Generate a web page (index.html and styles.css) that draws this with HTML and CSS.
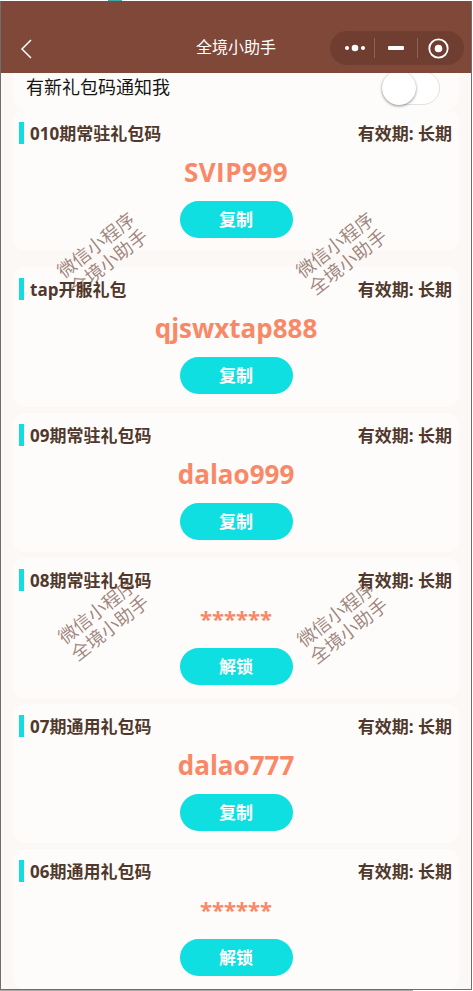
FILE: index.html
```html
<!DOCTYPE html>
<html lang="zh">
<head>
<meta charset="utf-8">
<title>全境小助手</title>
<link rel="stylesheet" href="styles.css">
</head>
<body>
<div class="top-strip"><span class="top-tab"></span></div>
<div class="window">
  <header class="nav">
    <svg class="back" width="14" height="20" viewBox="0 0 14 20"><path d="M12 1 L3 10 L12 19" fill="none" stroke="#fff" stroke-width="1.5"/></svg>
    <div class="nav-title">全境小助手</div>
    <div class="capsule">
      <svg class="cap-dots" width="22" height="10" viewBox="0 0 22 10"><circle cx="3" cy="5" r="2" fill="#fff"/><circle cx="11" cy="5" r="3.3" fill="#fff"/><circle cx="19" cy="5" r="2" fill="#fff"/></svg>
      <span class="cap-sep"></span>
      <span class="cap-min"></span>
      <span class="cap-sep"></span>
      <svg class="cap-home" width="21" height="21" viewBox="0 0 21 21"><circle cx="10.5" cy="10.5" r="9.2" fill="none" stroke="#fff" stroke-width="1.8"/><circle cx="10.5" cy="10.5" r="3.8" fill="#fff"/></svg>
    </div>
  </header>
  <main class="content">
    <section class="notice">
      <span>有新礼包码通知我</span>
      <span class="switch"><span class="knob"></span></span>
    </section>

    <section class="card first">
      <div class="card-head"><h2>010期常驻礼包码</h2><span class="valid">有效期: 长期</span></div>
      <div class="code wide">SVIP999</div>
      <button class="btn">复制</button>
    </section>
    <section class="card">
      <div class="card-head"><h2>tap开服礼包</h2><span class="valid">有效期: 长期</span></div>
      <div class="code">qjswxtap888</div>
      <button class="btn">复制</button>
    </section>
    <section class="card">
      <div class="card-head"><h2>09期常驻礼包码</h2><span class="valid">有效期: 长期</span></div>
      <div class="code">dalao999</div>
      <button class="btn">复制</button>
    </section>
    <section class="card">
      <div class="card-head"><h2>08期常驻礼包码</h2><span class="valid">有效期: 长期</span></div>
      <div class="code stars">******</div>
      <button class="btn">解锁</button>
    </section>
    <section class="card">
      <div class="card-head"><h2>07期通用礼包码</h2><span class="valid">有效期: 长期</span></div>
      <div class="code">dalao777</div>
      <button class="btn">复制</button>
    </section>
    <section class="card">
      <div class="card-head"><h2>06期通用礼包码</h2><span class="valid">有效期: 长期</span></div>
      <div class="code stars">******</div>
      <button class="btn">解锁</button>
    </section>
  </main>
  <div class="wm wm-a">微信小程序<br>全境小助手</div>
  <div class="wm wm-b">微信小程序<br>全境小助手</div>
  <div class="wm wm-c">微信小程序<br>全境小助手</div>
  <div class="wm wm-d">微信小程序<br>全境小助手</div>
</div>
<div class="bottom-strip"></div>
</body>
</html>
```
FILE: styles.css
```css
* { box-sizing: border-box; }
html, body { margin: 0; padding: 0; background: #fff; }
body {
  width: 473px;
  height: 991px;
  overflow: hidden;
  font-family: "Open Sans", "Noto Sans CJK SC", sans-serif;
}
.top-strip { height: 1px; padding-left: 108px; }
.top-tab { display: block; width: 14px; height: 1px; background: #3fa9a6; }
.bottom-strip { width: 413px; height: 1px; background: #ababab; }
.window {
  position: relative;
  width: 472px;
  height: 989px;
  border: 1px solid #6e6e6e;
  border-top: 0;
  background: #fcf8f5;
  overflow: hidden;
}
.nav {
  position: relative;
  z-index: 1;
  height: 72px;
  background: #7f4838;
  color: #fff;
}
.back { position: absolute; left: 18px; top: 38px; }
.nav-title {
  position: absolute;
  left: 0;
  right: 0;
  top: 35px;
  text-align: center;
  font-size: 16px;
  line-height: 22px;
}
.capsule {
  position: absolute;
  left: 329px;
  top: 30px;
  width: 134px;
  height: 34px;
  border-radius: 17px;
  background: #6f3e30;
  display: flex;
  align-items: center;
  padding-left: 14px;
}
.cap-sep { width: 1px; height: 20px; margin-left: 8px; background: #8f6254; }
.cap-min { width: 16px; height: 4px; margin-left: 13px; border-radius: 1px; background: #fff; }
.cap-min + .cap-sep { margin-left: 13px; }
.cap-home { margin-left: 10px; }
.notice {
  height: 37px;
  margin: 0 12px;
  padding: 0 19px 0 13px;
  border-radius: 0 0 14px 14px;
  background: #fefcfa;
  display: flex;
  align-items: flex-start;
  justify-content: space-between;
  font-size: 18px;
  line-height: 29px;
  color: #151515;
}
.switch {
  position: relative;
  flex: none;
  width: 58px;
  height: 34px;
  margin-top: -2px;
  border: 1px solid #e2e2e2;
  border-radius: 17px;
  background: #fff;
}
.knob {
  position: absolute;
  left: -1px;
  top: -1px;
  width: 34px;
  height: 34px;
  border-radius: 50%;
  background: #fff;
  box-shadow: 0 1px 3px rgba(0,0,0,.45);
}
.card {
  margin: 0 12px 6px;
  padding: 11px 7px 12.7px;
  border-radius: 12px;
  background: #fefcfa;
  display: flex;
  flex-direction: column;
  align-items: center;
}
.card.first { margin-bottom: 17px; padding-top: 12px; }
.card-head {
  align-self: stretch;
  height: 22px;
  margin-left: -1px;
  padding: 2px 0 0 6px;
  border-left: 5px solid #14dde0;
  display: flex;
  align-items: center;
  justify-content: space-between;
  color: #50392c;
}
.card-head h2 { margin: 0; font-size: 17px; font-weight: 700; line-height: 24px; }
.valid { font-size: 17px; font-weight: 700; line-height: 24px; }
.code {
  height: 56.8px;
  line-height: 57px;
  font-size: 26px;
  font-weight: 700;
  color: #f98867;
}
.code.wide { letter-spacing: .5px; }
.code.stars { font-size: 22px; line-height: 55px; }
.btn {
  width: 113px;
  height: 37px;
  padding: 0;
  border: 0;
  border-radius: 19px;
  background: #0fdfe0;
  color: #fff;
  font: 700 17px/37px "Open Sans", "Noto Sans CJK SC", sans-serif;
}
.wm {
  position: absolute;
  z-index: 2;
  width: 120px;
  text-align: center;
  font-size: 18.5px;
  line-height: 21px;
  color: rgba(90, 45, 30, .58);
  transform: rotate(-38deg);
  pointer-events: none;
}
.wm-a { left: 41px; top: 231px; }
.wm-b { left: 280px; top: 231px; }
.wm-c { left: 42px; top: 597px; }
.wm-d { left: 281px; top: 600px; }
```
